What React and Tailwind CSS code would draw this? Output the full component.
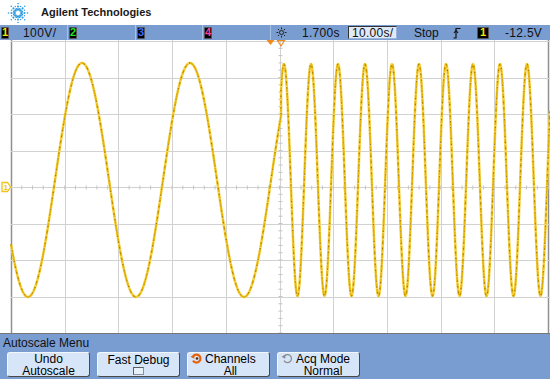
import React from 'react';

const GRID_X = Array.from({ length: 11 }, (_, i) => Math.round(11 + i * 53.7) + 0.5);
const GRID_Y = Array.from({ length: 9 }, (_, i) => Math.round(1 + i * 36.5) + 0.5);

// slow sine on the left half, 4x faster after the time reference
function tracePoints() {
  const pts = [];
  for (let x = 11; x <= 281; x += 0.5) {
    const y = 140 + 117 * Math.cos((2 * Math.PI * (x - 28)) / 108);
    pts.push(`${x},${y.toFixed(1)}`);
  }
  for (let x = 281; x <= 550; x += 0.25) {
    const y = 140 - 116 * Math.cos((2 * Math.PI * (x - 284)) / 27);
    pts.push(`${x},${y.toFixed(1)}`);
  }
  return pts.join(' ');
}

const AgilentSpark = () => {
  const dots = [];
  for (let i = 0; i < 16; i++) {
    const a = (i * Math.PI) / 8;
    const long = i % 2 === 0;
    const radii = long ? [3.5, 6.5, 9.5] : [4.5, 7];
    radii.forEach((r, j) => {
      dots.push(
        <circle
          key={`${i}-${j}`}
          cx={12 + r * Math.cos(a)}
          cy={10 + r * Math.sin(a)}
          r={long ? 1.3 - j * 0.25 : 0.9 - j * 0.2}
          fill="#2f9be0"
        />
      );
    });
  }
  return (
    <svg width="24" height="20" viewBox="0 0 24 20">
      {dots}
    </svg>
  );
};

const ChBox = ({ n, color, wide }) => (
  <div
    className={`${wide ? 'w-[12px]' : 'w-[8px]'} h-[12px] bg-black border border-[#555] rounded-[1px] flex items-center justify-center text-[11px] font-bold leading-none`}
    style={{ color }}
  >
    {n}
  </div>
);

const Sun = () => (
  <svg width="11" height="11" viewBox="0 0 11 11">
    <circle cx="5.5" cy="5.5" r="2" fill="none" stroke="#222" strokeWidth="1" />
    {Array.from({ length: 8 }, (_, i) => {
      const a = (i * Math.PI) / 4;
      return (
        <line
          key={i}
          x1={5.5 + 3.2 * Math.cos(a)}
          y1={5.5 + 3.2 * Math.sin(a)}
          x2={5.5 + 5 * Math.cos(a)}
          y2={5.5 + 5 * Math.sin(a)}
          stroke="#222"
          strokeWidth="1"
        />
      );
    })}
  </svg>
);

const Slope = () => (
  <svg width="8" height="12" viewBox="0 0 8 12">
    <path d="M0.5 11 H3 V1.5 H7.5" fill="none" stroke="#111" strokeWidth="1.2" />
    <path d="M1 6 L3 3.5 L5 6" fill="none" stroke="#111" strokeWidth="1.1" />
  </svg>
);

const StatusBar = () => (
  <div className="h-[15px] bg-[#7a9dd1] flex items-center text-[12px] text-[#111] leading-none">
    <div className="w-[67px] h-full flex items-center pl-[1px]">
      <ChBox n="1" color="#f2e600" />
      <span className="ml-[14px] tracking-[0.4px]">100V/</span>
    </div>
    <div className="w-[68px] h-full flex items-center pl-[1px] border-l border-[#a7c0e6]">
      <ChBox n="2" color="#22e022" />
    </div>
    <div className="w-[67px] h-full flex items-center pl-[1px] border-l border-[#a7c0e6]">
      <ChBox n="3" color="#3a6cff" />
    </div>
    <div className="w-[68px] h-full flex items-center pl-[1px] border-l border-[#a7c0e6]">
      <ChBox n="4" color="#ff3fa0" />
    </div>
    <div className="w-[75px] h-full flex items-center pl-[5px] border-l border-[#a7c0e6]">
      <Sun />
      <span className="ml-[15px] tracking-[0.3px]">1.700s</span>
    </div>
    <div className="w-[57px] h-full flex items-center pl-[3px]">
      <div className="w-[49px] h-[13px] bg-[#dfe9f7] border border-[#333] border-r-[#9bb3d8] border-b-[#9bb3d8] flex items-center pl-[3px] tracking-[0.3px]">
        10.00s/
      </div>
    </div>
    <div className="w-[43px] h-full flex items-center pl-[12px]">Stop</div>
    <div className="w-[25px] h-full flex items-center pl-[8px]">
      <Slope />
    </div>
    <div className="w-[25px] h-full flex items-center pl-[7px]">
      <ChBox n="1" color="#f2e600" wide />
    </div>
    <div className="flex-1 h-full flex items-center pl-[10px] tracking-[0.3px]">-12.5V</div>
  </div>
);

const Plot = () => {
  const cx = GRID_X[5];
  const cy = GRID_Y[4];
  const pts = tracePoints();
  return (
    <div className="h-[294px] bg-white">
      <svg width="550" height="294" viewBox="0 0 550 294" className="block">
        {GRID_X.map((x, i) => (
          <line
            key={`vx${i}`}
            x1={x}
            y1="0"
            x2={x}
            y2="294"
            stroke={i === 0 || i === 10 ? '#8f8f8f' : '#d2d2d2'}
            strokeWidth={i === 0 || i === 10 ? 1.5 : 1}
          />
        ))}
        {GRID_Y.map((y, i) => (
          <line key={`hy${i}`} x1="11" y1={y} x2="550" y2={y} stroke="#d2d2d2" strokeWidth="1" />
        ))}
        {Array.from({ length: 51 }, (_, i) => {
          const x = 11 + i * 10.74;
          return <line key={`tx${i}`} x1={x} y1={cy - 2} x2={x} y2={cy + 2} stroke="#c4c4c4" strokeWidth="1" />;
        })}
        {Array.from({ length: 41 }, (_, i) => {
          const y = 1 + i * 7.3;
          return <line key={`ty${i}`} x1={cx - 2} y1={y} x2={cx + 2} y2={y} stroke="#c4c4c4" strokeWidth="1" />;
        })}
        <line x1="0" y1="293.5" x2="550" y2="293.5" stroke="#777" strokeWidth="1" />

        <polyline points={pts} fill="none" stroke="#f5d55a" strokeWidth="2.6" strokeLinejoin="round" />
        <polyline points={pts} fill="none" stroke="#e8b400" strokeWidth="1.6" strokeLinejoin="round" strokeDasharray="5 1.5" />
        <polyline
          points={pts}
          fill="none"
          stroke="#5e4800"
          strokeWidth="1"
          strokeDasharray="1.2 4.5"
          opacity="0.6"
        />

        {/* trigger + time reference markers */}
        <path d="M266.5 0 H274.5 L270.5 5 Z" fill="#f08a1c" />
        <path d="M277.5 0.5 H284.5 L281 6 Z" fill="none" stroke="#f08a1c" strokeWidth="1.2" />

        {/* channel 1 ground marker */}
        <path d="M2 142.5 H7.5 L10.5 147 L7.5 151.5 H2 Z" fill="none" stroke="#f0c419" strokeWidth="1.3" />
        <text x="3.6" y="150" fontSize="8" fontWeight="bold" fill="#f0c419" fontFamily="Liberation Sans, Arial, sans-serif">
          1
        </text>
      </svg>
    </div>
  );
};

const RotateIcon = ({ active }) => (
  <svg width="13" height="11" viewBox="0 0 13 11">
    <path
      d="M3.2 3.2 A4 4 0 1 1 3 7.6"
      fill="none"
      stroke={active ? '#e8600a' : '#8a8a8a'}
      strokeWidth={active ? 2.2 : 1.2}
    />
    <path d="M0.5 3.8 L4.6 1.6 L4.2 5.8 Z" fill={active ? '#e8600a' : '#8a8a8a'} />
    {active && <circle cx="7" cy="5.5" r="1.3" fill="#5a2a00" />}
  </svg>
);

const SoftKey = ({ children }) => (
  <div className="w-[83px] h-[25px] rounded-[3px] bg-[#d6e5f8] border border-[#f2f7fd] border-r-[#4a4a42] border-b-[#4a4a42] flex flex-col items-center justify-center text-[12px] leading-[12px] text-black">
    {children}
  </div>
);

const Menu = () => (
  <div className="h-[45px] bg-[#7a9dd1] pl-[3px] pt-[2px]">
    <div className="text-[12px] leading-[14px] text-[#111]">Autoscale Menu</div>
    <div className="flex gap-[7px] pl-[4px] mt-[2px]">
      <SoftKey>
        <span>Undo</span>
        <span>Autoscale</span>
      </SoftKey>
      <SoftKey>
        <span>Fast Debug</span>
        <span className="mt-[1px] w-[11px] h-[8px] bg-[#e8f0fa] border border-[#8a8f99] border-t-[#5b5f66] border-l-[#5b5f66]" />
      </SoftKey>
      <SoftKey>
        <div className="flex items-start w-full pl-[2px]">
          <RotateIcon active />
          <div className="flex flex-col items-center ml-[2px]">
            <span>Channels</span>
            <span>All</span>
          </div>
        </div>
      </SoftKey>
      <SoftKey>
        <div className="flex items-start w-full pl-[3px]">
          <RotateIcon />
          <div className="flex flex-col items-center ml-[2px]">
            <span>Acq Mode</span>
            <span>Normal</span>
          </div>
        </div>
      </SoftKey>
    </div>
  </div>
);

export default function App() {
  return (
    <div className="w-[550px] h-[379px] overflow-hidden flex flex-col bg-white font-['Liberation_Sans',Arial,sans-serif]">
      <div className="h-[25px] flex items-center pl-[6px]">
        <AgilentSpark />
        <span className="ml-[11px] text-[11px] font-bold text-[#1a1a1a]">Agilent Technologies</span>
      </div>
      <StatusBar />
      <Plot />
      <Menu />
    </div>
  );
}
